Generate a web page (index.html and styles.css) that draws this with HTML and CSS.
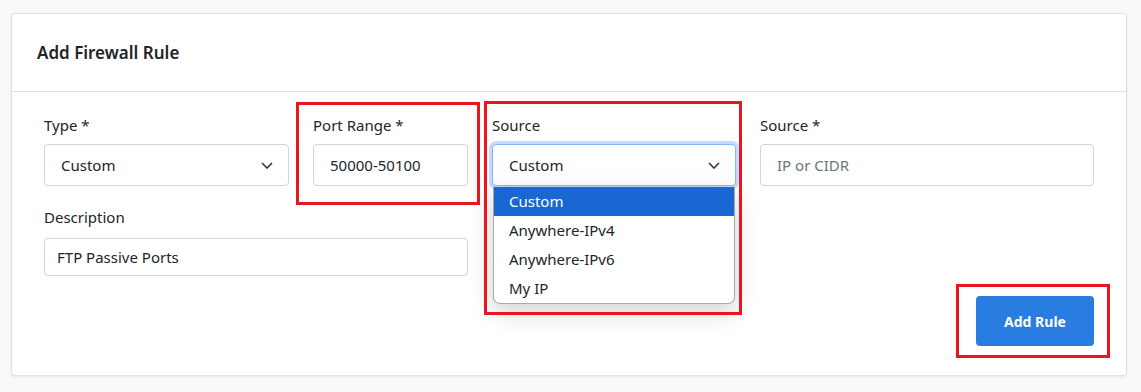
FILE: index.html
```html
<!DOCTYPE html>
<html lang="en">
<head>
    <meta charset="UTF-8">
    <meta name="viewport" content="width=device-width, initial-scale=1.0">
    <title>Add Firewall Rule</title>
    <link rel="stylesheet" href="styles.css">
</head>
<body>
    <div class="page">
        <div class="rule-card">
            <div class="card-header">
                <h2 class="title">Add Firewall Rule</h2>
            </div>
            <div class="card-body">
                <div class="form-grid">
                    <div class="form-group">
                        <label>Type *</label>
                        <div class="select">
                            <span>Custom</span>
                            <svg class="chevron" viewBox="0 0 12 7"><path d="M1 1l5 5 5-5"/></svg>
                        </div>
                    </div>
                    <div class="form-group">
                        <label>Port Range *</label>
                        <div class="input">50000-50100</div>
                    </div>
                    <div class="form-group source-group">
                        <label>Source</label>
                        <div class="select focused">
                            <span>Custom</span>
                            <svg class="chevron" viewBox="0 0 12 7"><path d="M1 1l5 5 5-5"/></svg>
                        </div>
                        <ul class="dropdown">
                            <li class="active">Custom</li>
                            <li>Anywhere-IPv4</li>
                            <li>Anywhere-IPv6</li>
                            <li>My IP</li>
                        </ul>
                    </div>
                    <div class="form-group">
                        <label>Source *</label>
                        <div class="input placeholder">IP or CIDR</div>
                    </div>
                    <div class="form-group description">
                        <label>Description</label>
                        <div class="input small">FTP Passive Ports</div>
                    </div>
                </div>
                <div class="actions">
                    <button type="button">Add Rule</button>
                </div>
            </div>
        </div>

        <!-- annotation boxes -->
        <div class="mark mark-port"></div>
        <div class="mark mark-source"></div>
        <div class="mark mark-button"></div>
    </div>
</body>
</html>
```

FILE: styles.css
```css
:root {
    --page-bg: #f8f9fa;
    --border: #dee2e6;
    --input-border: #ced4da;
    --text: #212529;
    --muted: #6c757d;
    --primary: #2a7de0;
    --mark: #e8161f;
}

body {
    margin: 0;
    background: var(--page-bg);
    color: var(--text);
    font-family: 'Noto Sans', 'Open Sans', sans-serif;
}

.page {
    position: relative;
    padding: 13px 14px 15px 11px;
}

.rule-card {
    width: 1116px;
    box-sizing: border-box;
    background: #fff;
    border: 1px solid var(--border);
    border-radius: 4px;
    box-shadow: 0 1px 3px rgba(0, 0, 0, 0.08);
}

.card-header {
    height: 77px;
    display: flex;
    align-items: center;
    padding: 0 25px;
    border-bottom: 1px solid var(--border);
}

.title {
    margin: 0;
    font-size: 17px;
    font-weight: 600;
}

.card-body {
    padding: 22px 32px 29px;
}

.form-grid {
    display: grid;
    grid-template-columns: 245px 155px 244px 1fr;
    column-gap: 24px;
    row-gap: 20px;
}

.form-group label {
    display: block;
    font-size: 15px;
    line-height: 22px;
    margin-bottom: 8px;
}

.description {
    grid-column: 1 / 3;
}

.description label {
    margin-bottom: 10px;
}

.select,
.input {
    height: 42px;
    box-sizing: border-box;
    border: 1px solid var(--input-border);
    border-radius: 4px;
    display: flex;
    align-items: center;
    justify-content: space-between;
    padding: 0 15px 0 16px;
    font-size: 15px;
    background: #fff;
}

.input.small {
    height: 38px;
    padding-left: 12px;
}

.placeholder {
    color: var(--muted);
}

.chevron {
    width: 12px;
    height: 7px;
    fill: none;
    stroke: #343a40;
    stroke-width: 1.6;
}

.select.focused {
    border-color: #86b7fe;
    box-shadow: 0 0 0 3px rgba(13, 110, 253, 0.25);
}

.source-group {
    position: relative;
}

.dropdown {
    position: absolute;
    top: 73px;
    left: 1px;
    right: 1px;
    margin: 0;
    padding: 0;
    list-style: none;
    background: #fff;
    border: 1px solid #a9a9a9;
    border-top: none;
    border-radius: 0 0 7px 7px;
    box-shadow: 0 8px 24px rgba(0, 0, 0, 0.18);
    overflow: hidden;
    z-index: 2;
}

.dropdown li {
    height: 29px;
    line-height: 29px;
    padding-left: 15px;
    font-size: 15px;
}

.dropdown li.active {
    background: #1967d2;
    color: #fff;
}

.actions {
    display: flex;
    justify-content: flex-end;
    margin-top: 20px;
}

button {
    width: 118px;
    height: 50px;
    background: var(--primary);
    color: #fff;
    border: none;
    border-radius: 4px;
    font-family: inherit;
    font-size: 14px;
    font-weight: 700;
    cursor: pointer;
}

.mark {
    position: absolute;
    border: 3px solid var(--mark);
    box-sizing: border-box;
    z-index: 3;
}

.mark-port {
    left: 296px;
    top: 102px;
    width: 184px;
    height: 103px;
}

.mark-source {
    left: 484px;
    top: 101px;
    width: 258px;
    height: 214px;
}

.mark-button {
    left: 956px;
    top: 284px;
    width: 154px;
    height: 74px;
}
```
